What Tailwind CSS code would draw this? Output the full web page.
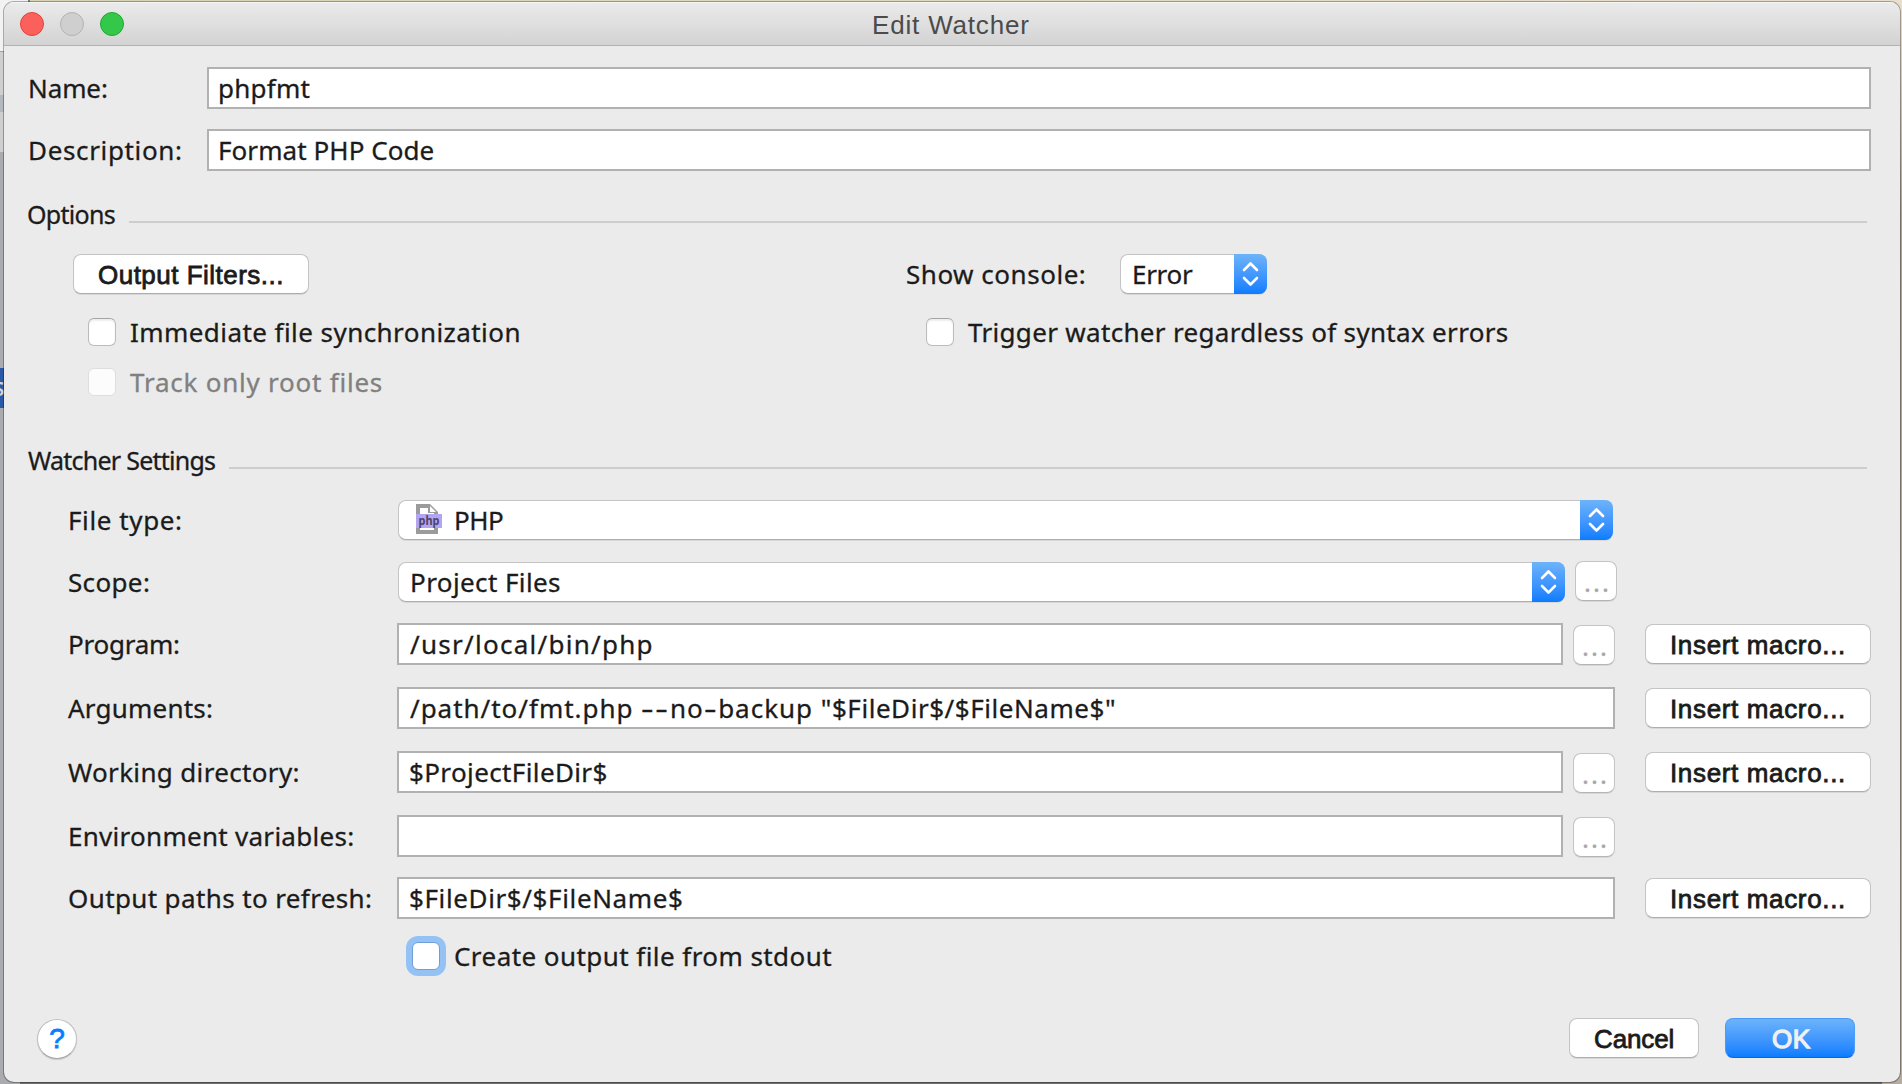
<!DOCTYPE html>
<html lang="en">
<head>
<meta charset="utf-8">
<title>Edit Watcher</title>
<script src="https://cdn.jsdelivr.net/npm/@tailwindcss/browser@4"></script>
</head>
<body class="relative w-[1902px] h-[1084px] overflow-hidden bg-[#6f6f6f] font-['Noto_Sans',sans-serif] text-[26px] leading-[40px] text-[#1b1b1b] whitespace-nowrap [-webkit-text-stroke:0.3px_currentColor]">

<svg width="0" height="0" class="absolute">
  <defs>
    <symbol id="arrows" viewBox="0 0 33 40">
      <path d="M10 16l6.500-6.500L23 16M10 24l6.500 6.500L23 24" fill="none" stroke="#fff" stroke-width="2.600" stroke-linecap="round" stroke-linejoin="round"/>
    </symbol>
  </defs>
</svg>

<!-- Editor behind the dialog -->
<div class="absolute inset-x-0 top-0 h-5 bg-linear-to-r from-[#d6d3b6] to-[#e8dfca]"></div>
<div class="absolute left-7 top-0 h-2 w-0.5 bg-[#7d8486]"></div>
<div class="absolute left-0 top-0 w-7 h-[51px] bg-[#f2f2f2]"></div>
<div class="absolute left-0 top-[51px] w-5 h-[102px] bg-[#cfcfcf] border-t border-[#a0a0a0]"></div>
<div class="absolute left-0 top-[95px] w-5 h-[17px] bg-[#b4b8bd]"></div>
<div class="absolute left-0 top-[152px] w-5 bottom-0 bg-[#a9abae]"></div>
<div class="absolute left-0 top-[368px] w-5 h-10 bg-[#2a59a8] overflow-hidden text-[#d4d4d4]"><span class="block -ml-2 -mt-0.5">s</span></div>
<div class="absolute right-0 top-0 w-5 bottom-0 bg-linear-to-b from-[#e8e0cc] via-[#a9a294] via-20% to-[#b5ada0]"></div>

<div class="absolute left-1 top-0.5 w-[1896px] h-[1080px] rounded-[10px] bg-[#ebebeb] overflow-hidden flex flex-col shadow-[0_0_0_1px_rgba(0,0,0,0.3)]">

  <div class="relative h-11 shrink-0 flex items-center pl-4 gap-4 bg-linear-to-b from-[#ebebeb] to-[#d3d3d3] border-b border-[#b1b1b1] shadow-[inset_0_1px_0_#f6f6f6] pt-px">
    <div class="size-6 rounded-full bg-[#fc605c] border border-[#e0443e]"></div>
    <div class="size-6 rounded-full bg-[#cfcfcf] border border-[#b3b3b3]"></div>
    <div class="size-6 rounded-full bg-[#34c84a] border border-[#1fa834]"></div>
    <div class="pl-[732px] pt-0.5 font-['Liberation_Sans',sans-serif] tracking-[0.82px] text-[#4b4b4b] [-webkit-text-stroke:0px]"><span class="block">Edit Watcher</span></div>
  </div>

  <div class="mt-[21px] h-[42px] shrink-0 flex items-center pl-6">
    <div class="w-[179px] tracking-[-0.1px]">Name:</div>
    <div class="w-[1664px] h-[42px] bg-white border-2 border-[#b1b1b1] pl-[9px] leading-[38px] tracking-[0.25px]">phpfmt</div>
  </div>
  <div class="mt-5 h-[42px] shrink-0 flex items-center pl-6">
    <div class="w-[179px] tracking-[0.65px]">Description:</div>
    <div class="w-[1664px] h-[42px] bg-white border-2 border-[#b1b1b1] pl-[9px] leading-[38px] tracking-[0.07px]">Format PHP Code</div>
  </div>

  <div class="mt-7 mb-px h-[30px] shrink-0 flex items-center pl-[23px]">
    <div class="w-[102px] text-[25px] tracking-[-0.7px]">Options</div>
    <div class="w-[1738px] h-0.5 mt-4 bg-[#cdcdcd]"></div>
  </div>

  <div class="mt-6 h-10 shrink-0 flex items-center pl-[69px]">
    <div class="w-[236px] h-10 rounded-lg bg-white border border-[#c4c4c4] border-b-[#adadad] shadow-[0_1px_0_rgba(0,0,0,0.08)] pl-6 pt-px leading-[38px] font-['Liberation_Sans',sans-serif] tracking-[0.48px] [-webkit-text-stroke:0.8px_#1b1b1b]">Output Filters...</div>
    <div class="ml-[597px] w-[214px] tracking-[0.52px]">Show console:</div>
    <div class="w-[147px] h-10 rounded-lg bg-white border border-[#c4c4c4] border-b-[#adadad] shadow-[0_1px_0_rgba(0,0,0,0.08)] flex justify-between pl-[11px] leading-[38px] tracking-[-0.29px]">Error
      <svg class="w-[33px] h-10 -m-px rounded-r-lg bg-linear-to-b from-[#6cb3fa] to-[#087cff]"><use href="#arrows"/></svg>
    </div>
  </div>

  <div class="mt-6 h-7 shrink-0 flex items-center pl-[84px]">
    <div class="size-7 rounded-md bg-white border border-[#bcbcbc] border-t-[#a4a4a4] shadow-[inset_0_2px_2px_rgba(0,0,0,0.07)]"></div>
    <div class="ml-3.5 w-[796px] tracking-[0.44px]">Immediate file synchronization</div>
    <div class="size-7 rounded-md bg-white border border-[#bcbcbc] border-t-[#a4a4a4] shadow-[inset_0_2px_2px_rgba(0,0,0,0.07)]"></div>
    <div class="ml-3.5 tracking-[0.32px]">Trigger watcher regardless of syntax errors</div>
  </div>
  <div class="mt-[22px] h-7 shrink-0 flex items-center pl-[84px]">
    <div class="size-7 rounded-md bg-[#fcfcfc] border border-[#dedede]"></div>
    <div class="ml-3.5 tracking-[0.77px] text-[#808080]">Track only root files</div>
  </div>

  <div class="mt-[49px] mb-px h-[30px] shrink-0 flex items-center pl-6">
    <div class="w-[201px] text-[25px] tracking-[-0.75px]">Watcher Settings</div>
    <div class="w-[1638px] h-0.5 mt-4 bg-[#cdcdcd]"></div>
  </div>

  <div class="mt-6 h-10 shrink-0 flex items-center pl-[64px]">
    <div class="w-[330px] tracking-[0.6px]">File type:</div>
    <div class="w-[1215px] h-10 rounded-lg bg-white border border-[#c4c4c4] border-b-[#adadad] shadow-[0_1px_0_rgba(0,0,0,0.08)] flex leading-[38px]">
      <svg class="ml-[17px] mt-[3px] w-[26px] h-[30px]" viewBox="0 0 26 30">
        <path d="M0 0h14l8 8v22H0z" fill="#9b9b9b"/>
        <path d="M4 4h8v5h6v17H4z" fill="#fff"/>
        <path d="M14 2v6h6z" fill="#fff"/>
        <rect y="10" width="26" height="14" fill="#b4a4f4"/>
        <text x="2.500" y="20.500" font-family="Noto Sans" font-size="13" font-weight="700" fill="#4d4468" textLength="21" lengthAdjust="spacingAndGlyphs">php</text>
      </svg>
      <span class="ml-3 grow tracking-[-0.5px]">PHP</span>
      <svg class="w-[33px] h-10 -m-px rounded-r-lg bg-linear-to-b from-[#6cb3fa] to-[#087cff]"><use href="#arrows"/></svg>
    </div>
  </div>

  <div class="mt-[22px] h-10 shrink-0 flex items-center pl-[64px]">
    <div class="w-[330px] tracking-[0.35px]">Scope:</div>
    <div class="w-[1167px] h-10 rounded-lg bg-white border border-[#c4c4c4] border-b-[#adadad] shadow-[0_1px_0_rgba(0,0,0,0.08)] flex justify-between pl-[11px] leading-[38px] tracking-[0.4px]">Project Files
      <svg class="w-[33px] h-10 -m-px rounded-r-lg bg-linear-to-b from-[#6cb3fa] to-[#087cff]"><use href="#arrows"/></svg>
    </div>
    <div class="ml-2.5 -mt-0.5 w-[42px] h-10 rounded-lg bg-white border border-[#c4c4c4] border-b-[#b4b4b4] shadow-[0_1px_0_rgba(0,0,0,0.08)] pl-2 leading-[40px] tracking-[2px] text-[#a6a6a6]">...</div>
  </div>

  <div class="mt-[21px] h-[42px] shrink-0 flex items-center pl-[64px]">
    <div class="w-[329px] tracking-[-0.25px]">Program:</div>
    <div class="w-[1166px] h-[42px] bg-white border-2 border-[#b1b1b1] pl-[11px] leading-[38px] tracking-[1.27px]">/usr/local/bin/php</div>
    <div class="ml-2.5 mt-0.5 w-[42px] h-10 rounded-lg bg-white border border-[#c4c4c4] border-b-[#b4b4b4] shadow-[0_1px_0_rgba(0,0,0,0.08)] pl-2 leading-[40px] tracking-[2px] text-[#a6a6a6]">...</div>
    <div class="ml-[30px] w-[226px] h-10 rounded-lg bg-white border border-[#c4c4c4] border-b-[#adadad] shadow-[0_1px_0_rgba(0,0,0,0.08)] pl-6 pt-px leading-[38px] font-['Liberation_Sans',sans-serif] tracking-[0.65px] [-webkit-text-stroke:0.8px_#1b1b1b]">Insert macro...</div>
  </div>

  <div class="mt-[22px] h-[42px] shrink-0 flex items-center pl-[64px]">
    <div class="w-[329px] tracking-[0.22px]">Arguments:</div>
    <div class="w-[1218px] h-[42px] bg-white border-2 border-[#b1b1b1] pl-[11px] leading-[38px] tracking-[0.98px]">/path/to/fmt.php <span class="inline-block origin-left scale-x-150 mr-[9.6px] tracking-[1.2px]">--</span>no<span class="inline-block origin-left scale-x-150 mr-[4.8px] tracking-[1.2px]">-</span>backup <span class="tracking-[0.55px]">"$FileDir$/$FileName$"</span></div>
    <div class="ml-[30px] w-[226px] h-10 rounded-lg bg-white border border-[#c4c4c4] border-b-[#adadad] shadow-[0_1px_0_rgba(0,0,0,0.08)] pl-6 pt-px leading-[38px] font-['Liberation_Sans',sans-serif] tracking-[0.65px] [-webkit-text-stroke:0.8px_#1b1b1b]">Insert macro...</div>
  </div>

  <div class="mt-[22px] h-[42px] shrink-0 flex items-center pl-[64px]">
    <div class="w-[329px] tracking-[0.34px]">Working directory:</div>
    <div class="w-[1166px] h-[42px] bg-white border-2 border-[#b1b1b1] pl-2.5 leading-[38px] tracking-[0.38px]">$ProjectFileDir$</div>
    <div class="ml-2.5 mt-0.5 w-[42px] h-10 rounded-lg bg-white border border-[#c4c4c4] border-b-[#b4b4b4] shadow-[0_1px_0_rgba(0,0,0,0.08)] pl-2 leading-[40px] tracking-[2px] text-[#a6a6a6]">...</div>
    <div class="ml-[30px] w-[226px] h-10 rounded-lg bg-white border border-[#c4c4c4] border-b-[#adadad] shadow-[0_1px_0_rgba(0,0,0,0.08)] pl-6 pt-px leading-[38px] font-['Liberation_Sans',sans-serif] tracking-[0.65px] [-webkit-text-stroke:0.8px_#1b1b1b]">Insert macro...</div>
  </div>

  <div class="mt-[22px] h-[42px] shrink-0 flex items-center pl-[64px]">
    <div class="w-[329px] tracking-[0.28px]">Environment variables:</div>
    <div class="w-[1166px] h-[42px] bg-white border-2 border-[#b1b1b1]"></div>
    <div class="ml-2.5 mt-0.5 w-[42px] h-10 rounded-lg bg-white border border-[#c4c4c4] border-b-[#b4b4b4] shadow-[0_1px_0_rgba(0,0,0,0.08)] pl-2 leading-[40px] tracking-[2px] text-[#a6a6a6]">...</div>
  </div>

  <div class="mt-5 h-[42px] shrink-0 flex items-center pl-[64px]">
    <div class="w-[329px] tracking-[0.38px]">Output paths to refresh:</div>
    <div class="w-[1218px] h-[42px] bg-white border-2 border-[#b1b1b1] pl-2.5 leading-[38px] tracking-[0.62px]">$FileDir$/$FileName$</div>
    <div class="ml-[30px] w-[226px] h-10 rounded-lg bg-white border border-[#c4c4c4] border-b-[#adadad] shadow-[0_1px_0_rgba(0,0,0,0.08)] pl-6 pt-px leading-[38px] font-['Liberation_Sans',sans-serif] tracking-[0.65px] [-webkit-text-stroke:0.8px_#1b1b1b]">Insert macro...</div>
  </div>

  <div class="mt-[23px] h-7 shrink-0 flex items-center pl-[408px]">
    <div class="size-7 rounded-md bg-white border border-[#6f9fd6] ring-6 ring-[#94c2f4]"></div>
    <div class="ml-3.5 tracking-[0.44px]">Create output file from stdout</div>
  </div>

  <div class="mt-12 h-10 shrink-0 flex items-center pl-[33px]">
    <div class="mt-0.5 size-10 rounded-full bg-white border border-[#c0c0c0] border-b-[#a8a8a8] shadow-[0_1px_1px_rgba(0,0,0,0.15)] text-center leading-[38px] text-[28px] font-['Liberation_Sans',sans-serif] text-[#087cff] [-webkit-text-stroke:0.8px_#087cff]">?</div>
    <div class="ml-[1492px] w-[130px] h-10 rounded-lg bg-white border border-[#c4c4c4] border-b-[#adadad] shadow-[0_1px_0_rgba(0,0,0,0.08)] pl-6 pt-px leading-[38px] font-['Liberation_Sans',sans-serif] tracking-[-0.13px] [-webkit-text-stroke:0.8px_#1b1b1b]">Cancel</div>
    <div class="ml-[26px] w-[130px] h-10 rounded-lg bg-linear-to-b from-[#6cb3fa] to-[#087cff] border border-[#4a9cf8] border-b-[#0a63f0] pl-[46px] pt-px leading-[38px] font-['Liberation_Sans',sans-serif] tracking-[0.5px] text-[#f0f0f0] [-webkit-text-stroke:1.3px_#f0f0f0]">OK</div>
  </div>
</div>
</body>
</html>
